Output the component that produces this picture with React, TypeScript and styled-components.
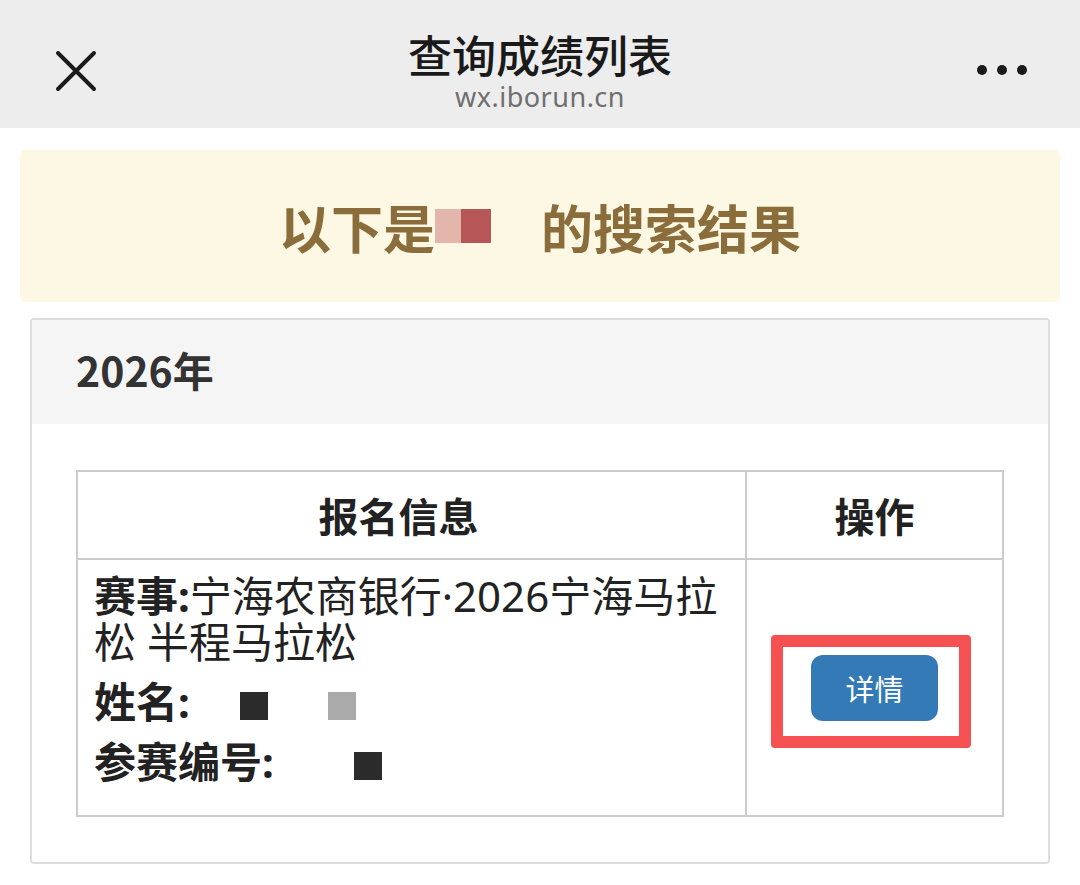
import React from 'react';
import styled, { createGlobalStyle } from 'styled-components';

const CJK = `"Noto Sans CJK SC", "Noto Sans", sans-serif`;
const MIXED = `"Noto Sans", "Noto Sans CJK SC", sans-serif`;

const GlobalStyle = createGlobalStyle`
	body {
		margin: 0;
		background: #ffffff;
		font-family: ${CJK};
	}
`;

type Field = {
	label: string;
	value?: string;
	blots?: { color: string; gap: number }[];
};

const FIELDS: Field[] = [
	{ label: '赛事:', value: '宁海农商银行·2026宁海马拉松 半程马拉松' },
	{
		label: '姓名:',
		blots: [
			{ color: '#2b2b2b', gap: 50 },
			{ color: '#aaaaaa', gap: 60 },
		],
	},
	{ label: '参赛编号:', blots: [{ color: '#2b2b2b', gap: 80 }] },
];

const CloseIcon = () => (
	<svg width="44" height="44" viewBox="0 0 44 44">
		<path d="M4 4 L40 40 M40 4 L4 40" stroke="#1a1a1a" strokeWidth="4" strokeLinecap="round" />
	</svg>
);

const MoreIcon = () => (
	<svg width="52" height="12" viewBox="0 0 52 12">
		<circle cx="6" cy="6" r="5" fill="#1a1a1a" />
		<circle cx="26" cy="6" r="5" fill="#1a1a1a" />
		<circle cx="46" cy="6" r="5" fill="#1a1a1a" />
	</svg>
);

const App = () => (
	<>
		<GlobalStyle />
		<NavBar>
			<NavSide>
				<CloseIcon />
			</NavSide>
			<NavTitleBlock>
				<NavTitle>查询成绩列表</NavTitle>
				<NavHost>wx.iborun.cn</NavHost>
			</NavTitleBlock>
			<NavSide $right>
				<MoreIcon />
			</NavSide>
		</NavBar>

		<Content>
			<Banner>
				以下是
				<Redact $color="#e2b6ab" $width={26} />
				<Redact $color="#b65656" $width={30} />
				<Redact $color="transparent" $width={50} />
				的搜索结果
			</Banner>

			<Panel>
				<PanelHeading>2026年</PanelHeading>
				<PanelBody>
					<Table>
						<thead>
							<tr>
								<HeadCell $width={669} $shift={26}>报名信息</HeadCell>
								<HeadCell>操作</HeadCell>
							</tr>
						</thead>
						<tbody>
							<tr>
								<InfoCell>
									{FIELDS.map(f => (
										<FieldLine key={f.label}>
											<FieldLabel>{f.label}</FieldLabel>
											{f.value}
											{f.blots?.map((b, i) => (
												<Blot key={i} $color={b.color} $gap={b.gap} />
											))}
										</FieldLine>
									))}
								</InfoCell>
								<ActionCell>
									<Highlight>
										<DetailButton>详情</DetailButton>
									</Highlight>
								</ActionCell>
							</tr>
						</tbody>
					</Table>
				</PanelBody>
			</Panel>
		</Content>
	</>
);

const NavBar = styled.div`
	height: 128px;
	background: #ededed;
	display: grid;
	grid-template-columns: 1fr auto 1fr;
	align-items: start;
`;

const NavSide = styled.div<{ $right?: boolean }>`
	display: flex;
	justify-content: ${p => (p.$right ? 'flex-end' : 'flex-start')};
	padding: ${p => (p.$right ? '64px 52px 0 0' : '49px 0 0 54px')};
`;

const NavTitleBlock = styled.div`
	display: flex;
	flex-direction: column;
	align-items: center;
	padding-top: 30px;
`;

const NavTitle = styled.div`
	font-size: 44px;
	line-height: 48px;
	color: #1a1a1a;
	font-weight: 500;
`;

const NavHost = styled.div`
	font-family: "Noto Sans", "Liberation Sans", sans-serif;
	font-size: 27px;
	line-height: 30px;
	color: #6f6f6f;
	margin-top: 4px;
	letter-spacing: 0.5px;
`;

const Content = styled.div`
	padding: 22px 20px;
`;

const Banner = styled.div`
	height: 152px;
	background: #fcf8e3;
	border-radius: 6px;
	display: flex;
	align-items: center;
	justify-content: center;
	font-size: 52px;
	font-weight: 700;
	color: #8a6d3b;
	margin-bottom: 16px;
`;

const Redact = styled.span<{ $color: string; $width: number }>`
	display: inline-block;
	width: ${p => p.$width}px;
	height: 34px;
	background: ${p => p.$color};
`;

const Panel = styled.div`
	margin: 0 10px;
	border: 2px solid #dddddd;
	border-radius: 4px;
	overflow: hidden;
`;

const PanelHeading = styled.div`
	height: 104px;
	box-sizing: border-box;
	padding: 0 0 6px 44px;
	background: #f5f5f5;
	display: flex;
	align-items: center;
	font-size: 41px;
	font-weight: 700;
	color: #333333;
`;

const PanelBody = styled.div`
	padding: 46px 44px 45px;
	background: #ffffff;
`;

const Table = styled.table`
	width: 100%;
	border-collapse: collapse;
	border: 2px solid #cccccc;
`;

const HeadCell = styled.th<{ $width?: number; $shift?: number }>`
	box-sizing: border-box;
	width: ${p => (p.$width ? `${p.$width}px` : 'auto')};
	height: 88px;
	border: 2px solid #cccccc;
	font-size: 40px;
	font-weight: 700;
	color: #222222;
	text-align: center;
	padding: 0 ${p => p.$shift ?? 0}px 0 0;
`;

const InfoCell = styled.td`
	border: 2px solid #cccccc;
	padding: 13px 16px 30px 16px;
	vertical-align: top;
	font-family: ${MIXED};
	font-size: 42px;
	line-height: 46px;
	color: #222222;
`;

const FieldLine = styled.div`
	margin-bottom: 14px;
	&:last-child {
		margin-bottom: 0;
	}
`;

const FieldLabel = styled.span`
	font-weight: 700;
`;

const Blot = styled.span<{ $color: string; $gap: number }>`
	display: inline-block;
	width: 28px;
	height: 28px;
	margin-left: ${p => p.$gap}px;
	vertical-align: -2px;
	background: ${p => p.$color};
`;

const ActionCell = styled.td`
	border: 2px solid #cccccc;
	text-align: center;
	vertical-align: middle;
	padding: 0;
`;

const Highlight = styled.span`
	position: relative;
	display: inline-block;
	&::after {
		content: '';
		position: absolute;
		top: -20px;
		left: -40px;
		right: -33px;
		bottom: -27px;
		border: 12px solid #f65152;
		border-radius: 4px;
	}
`;

const DetailButton = styled.button`
	width: 127px;
	height: 66px;
	border: none;
	border-radius: 12px;
	background: #337ab7;
	color: #ffffff;
	font-family: ${CJK};
	font-size: 29px;
	display: flex;
	align-items: center;
	justify-content: center;
	padding: 0;
`;

export default App;
